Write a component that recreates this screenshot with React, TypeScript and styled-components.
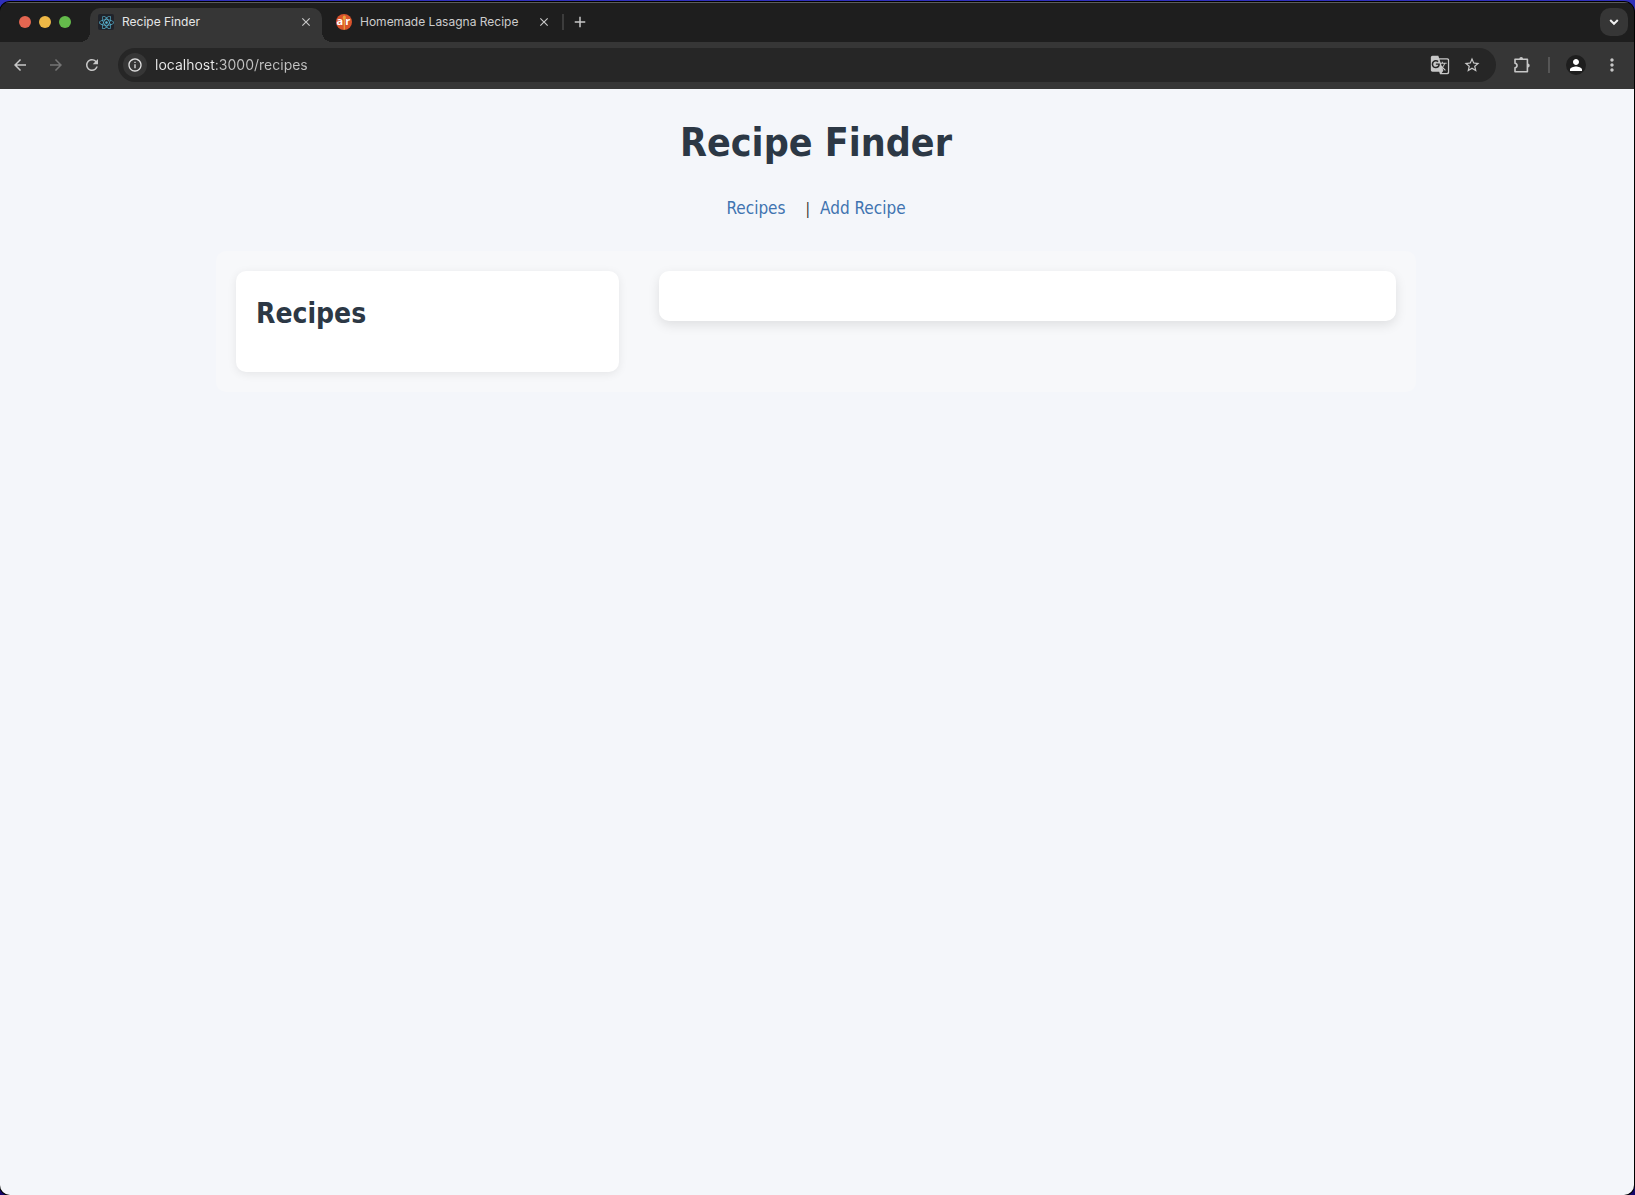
import React from "react";
import styled, { createGlobalStyle } from "styled-components";
import { FaReact } from "react-icons/fa";
import {
  MdAdd,
  MdArrowBack,
  MdArrowForward,
  MdClose,
  MdGTranslate,
  MdInfoOutline,
  MdMoreVert,
  MdPerson,
  MdRefresh,
  MdStarBorder,
} from "react-icons/md";

const uiFont = `Inter, "Liberation Sans", sans-serif`;
const pageFont = `"DejaVu Sans Condensed", "DejaVu Sans", sans-serif`;

const GlobalStyle = createGlobalStyle`
  *, *::before, *::after { box-sizing: border-box; }
  html, body { margin: 0; height: 100%; }
  body { background: #16066c; }
  #root { height: 100%; }
`;

const Desktop = styled.div`
  display: flex;
  min-height: 100vh;
  padding: 2px 1px 0 0;
  background: linear-gradient(#3030bc, #16066c);
`;

const BrowserWindow = styled.div`
  flex: 1;
  display: flex;
  flex-direction: column;
  overflow: hidden;
  border-radius: 10px;
  background: #1e1e1e;
  box-shadow: 0 0 0 1px #000;
`;

const TabStrip = styled.div`
  display: flex;
  align-items: flex-end;
  height: 40px;
  padding-left: 19px;
  border-top: 1px solid #5c5c5c;
  background: #1e1e1e;
  font-family: ${uiFont};
`;

const TrafficLights = styled.div`
  display: flex;
  gap: 8px;
  margin: 0 19px 14px 0;
`;

const Light = styled.button<{ $color: string }>`
  width: 12px;
  height: 12px;
  padding: 0;
  border: 0;
  border-radius: 50%;
  background: ${(p) => p.$color};
`;

const Tab = styled.div<{ $active?: boolean }>`
  position: relative;
  display: flex;
  align-items: center;
  gap: 8px;
  width: ${(p) => (p.$active ? 232 : 240)}px;
  height: 34px;
  padding: ${(p) => (p.$active ? "0 8px 6px 8px" : "0 10px 6px 14px")};
  border-radius: 10px 10px 0 0;
  background: ${(p) => (p.$active ? "#363636" : "transparent")};
  color: ${(p) => (p.$active ? "#e6e6e6" : "#cccccc")};
  font-size: 12px;
  line-height: 16px;

  &::before,
  &::after {
    content: ${(p) => (p.$active ? '""' : "none")};
    position: absolute;
    bottom: 0;
    width: 10px;
    height: 10px;
  }
  &::before {
    left: -10px;
    background: radial-gradient(circle at 0 0, transparent 10px, #363636 10px);
  }
  &::after {
    right: -10px;
    background: radial-gradient(circle at 100% 0, transparent 10px, #363636 10px);
  }
`;

const TabTitle = styled.span`
  flex: 1;
  white-space: nowrap;
`;

const ReactFavicon = styled.span`
  display: grid;
  place-items: center;
  width: 16px;
  height: 16px;
  border-radius: 2px;
  background: #20232a;
  color: #58b4d1;
  font-size: 15px;
`;

const IconButton = styled.button<{ $size?: number; $icon?: number; $dim?: boolean }>`
  display: grid;
  place-items: center;
  flex: none;
  width: ${(p) => p.$size ?? 28}px;
  height: ${(p) => p.$size ?? 28}px;
  padding: 0;
  border: 0;
  border-radius: 50%;
  background: transparent;
  color: ${(p) => (p.$dim ? "#757575" : "#c7c7c7")};
  font-size: ${(p) => p.$icon ?? 18}px;
`;

const TabDivider = styled.span`
  width: 2px;
  height: 16px;
  margin-bottom: 12px;
  background: #3c3c3c;
`;

const NewTab = styled(IconButton)`
  margin: 0 auto 6px 2px;
`;

const TabSearch = styled(IconButton)`
  margin: 0 6px 6px 0;
  border-radius: 10px;
  background: #363636;
  color: #f0f0f0;
`;

const Toolbar = styled.div`
  display: flex;
  align-items: center;
  gap: 8px;
  height: 47px;
  padding: 0 8px 1px 6px;
  background: #363636;
  font-family: ${uiFont};
`;

const AddressBar = styled.div`
  flex: 1;
  display: flex;
  align-items: center;
  height: 34px;
  margin: 0 4px;
  padding: 0 8px 0 5px;
  border-radius: 17px;
  background: #262626;
`;

const SiteInfo = styled(IconButton)`
  background: #363636;
  color: #e0e0e0;
`;

/* The host part of the address is lighter than its path. */
const Url = styled.input`
  flex: 1;
  min-width: 0;
  height: 20px;
  margin-left: 8px;
  padding: 0;
  border: 0;
  outline: 0;
  background: linear-gradient(90deg, #ececec 60px, #c2c2c2 60px);
  background-clip: text;
  -webkit-text-fill-color: transparent;
  font-family: inherit;
  font-size: 14px;
  line-height: 20px;
`;

const ToolbarDivider = styled.span`
  width: 2px;
  height: 16px;
  margin: 0 4px;
  background: #565656;
`;

const Avatar = styled(IconButton)`
  margin: 0 4px;
  background: #1e1e1e;
  color: #ffffff;
`;

const Page = styled.div`
  flex: 1;
  padding: 20px 22px 20px 20px;
  background: #f4f6fa;
  color: #333333;
  font-family: ${pageFont};
  font-size: 16px;
`;

const Title = styled.h1`
  margin: 8px 0 23px;
  color: #2c3845;
  font-size: 39px;
  line-height: 52px;
  text-align: center;
`;

const Nav = styled.nav`
  display: flex;
  justify-content: center;
  align-items: baseline;
  margin-bottom: 26px;
  line-height: 32px;
`;

const NavLink = styled.a`
  color: #4073b0;
  font-size: 17px;
  text-decoration: none;
`;

const NavSeparator = styled.span`
  margin: 0 10px 0 20px;
  font-size: 15px;
`;

const Container = styled.main`
  display: flex;
  align-items: flex-start;
  gap: 40px;
  max-width: 1200px;
  margin: 0 auto;
  padding: 20px;
  border-radius: 10px;
  background: #f7f8fa;
`;

const Card = styled.section<{ $grow: number; $pad: number; $shadow: string }>`
  flex: ${(p) => p.$grow} 1 0;
  padding: ${(p) => p.$pad}px;
  border-radius: 10px;
  background: #ffffff;
  box-shadow: ${(p) => p.$shadow};
`;

const CardHeading = styled.h2`
  margin: 5px 0 20px;
  color: #2c3845;
  font-size: 28px;
  line-height: 36px;
`;

const AllRecipesIcon = () => (
  <svg width="16" height="16" viewBox="0 0 16 16" aria-hidden="true">
    <circle cx="8" cy="8" r="8" fill="#d9532c" />
    <ellipse cx="8.3" cy="3.7" rx="1.6" ry="2.2" fill="#e9a33a" />
    <path d="M8.3 5v10.5" stroke="#e9a33a" strokeWidth="1.2" />
    <text x="0.6" y="11.4" fill="#fff" fontFamily="Open Sans, sans-serif" fontWeight="700" fontSize="11">a</text>
    <text x="9.3" y="11.4" fill="#fff" fontFamily="Open Sans, sans-serif" fontWeight="700" fontSize="11">r</text>
  </svg>
);

const PuzzleIcon = () => (
  <svg width="18" height="18" viewBox="0 0 18 18" fill="none" stroke="currentColor" strokeWidth="1.6" strokeLinejoin="round" aria-hidden="true">
    <path d="M2 3.3h12.4v12.4H2v-4c2.7-.4 2.7-4 0-4.4z" />
    <path d="M6.3 3a1.9 1.9 0 0 1 3.8 0zM14.8 7.6a1.9 1.9 0 0 1 0 3.8z" fill="currentColor" stroke="none" />
  </svg>
);

const ChevronIcon = () => (
  <svg width="10" height="10" viewBox="0 0 10 10" fill="none" stroke="currentColor" strokeWidth="2" aria-hidden="true">
    <path d="M1.2 3 5 6.8 8.8 3" />
  </svg>
);

export default function App() {
  return (
    <>
      <GlobalStyle />
      <Desktop>
        <BrowserWindow>
          <TabStrip>
            <TrafficLights>
              <Light $color="#e46651" aria-label="Close window" />
              <Light $color="#eeb846" aria-label="Minimize window" />
              <Light $color="#64bb4b" aria-label="Zoom window" />
            </TrafficLights>
            <Tab $active>
              <ReactFavicon><FaReact /></ReactFavicon>
              <TabTitle>Recipe Finder</TabTitle>
              <IconButton $size={16} $icon={14} aria-label="Close tab"><MdClose /></IconButton>
            </Tab>
            <Tab>
              <AllRecipesIcon />
              <TabTitle>Homemade Lasagna Recipe</TabTitle>
              <IconButton $size={16} $icon={14} aria-label="Close tab"><MdClose /></IconButton>
            </Tab>
            <TabDivider />
            <NewTab aria-label="New tab"><MdAdd /></NewTab>
            <TabSearch aria-label="Search tabs"><ChevronIcon /></TabSearch>
          </TabStrip>
          <Toolbar>
            <IconButton aria-label="Back"><MdArrowBack /></IconButton>
            <IconButton $dim aria-label="Forward"><MdArrowForward /></IconButton>
            <IconButton aria-label="Reload"><MdRefresh /></IconButton>
            <AddressBar>
              <SiteInfo $size={24} $icon={16} aria-label="Site information"><MdInfoOutline /></SiteInfo>
              <Url aria-label="Address" type="text" defaultValue="localhost:3000/recipes" />
              <IconButton $size={32} $icon={20} aria-label="Translate page"><MdGTranslate /></IconButton>
              <IconButton $size={32} aria-label="Bookmark page"><MdStarBorder /></IconButton>
            </AddressBar>
            <IconButton aria-label="Extensions"><PuzzleIcon /></IconButton>
            <ToolbarDivider />
            <Avatar $size={20} $icon={18} aria-label="Profile"><MdPerson /></Avatar>
            <IconButton $icon={20} aria-label="Menu"><MdMoreVert /></IconButton>
          </Toolbar>
          <Page>
            <Title>Recipe Finder</Title>
            <Nav>
              <NavLink href="/recipes">Recipes</NavLink>
              <NavSeparator>|</NavSeparator>
              <NavLink href="/add-recipe">Add Recipe</NavLink>
            </Nav>
            <Container>
              <Card $grow={1} $pad={20} $shadow="0 2px 10px rgba(0, 0, 0, 0.08)">
                <CardHeading>Recipes</CardHeading>
              </Card>
              <Card $grow={2} $pad={25} $shadow="0 4px 12px rgba(0, 0, 0, 0.1)" />
            </Container>
          </Page>
        </BrowserWindow>
      </Desktop>
    </>
  );
}
